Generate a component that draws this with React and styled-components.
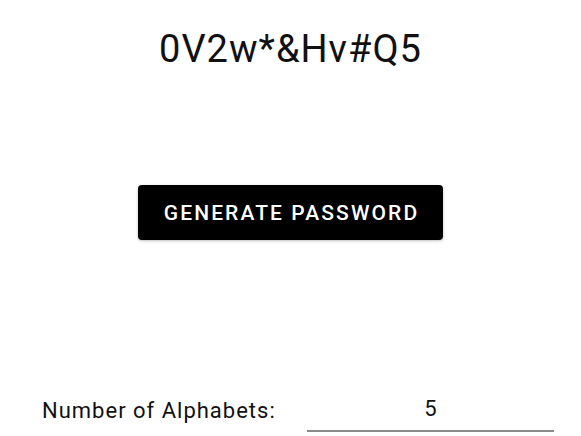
import React, { useState } from 'react';
import styled, { createGlobalStyle } from 'styled-components';

const GlobalStyle = createGlobalStyle`
    body {
        margin: 0;
        background: #ffffff;
        font-family: Roboto, "Liberation Sans", sans-serif;
    }
`;

const Page = styled.div`
    width: 581px;
    height: 436px;
    display: flex;
    flex-direction: column;
    align-items: center;
    box-sizing: border-box;
    padding-top: 27px;
`;

const Password = styled.h1`
    margin: 0;
    font-size: 38px;
    font-weight: 400;
    line-height: 44px;
    letter-spacing: 1px;
    color: #111;
`;

const Button = styled.button`
    margin-top: 114px;
    height: 55px;
    padding: 0 24px 0 26px;
    background: #000;
    color: #fff;
    border: none;
    border-radius: 4px;
    font-family: Roboto, "Liberation Sans", sans-serif;
    font-size: 21px;
    font-weight: 500;
    letter-spacing: 2.1px;
    box-shadow: 0 1px 3px rgba(0, 0, 0, 0.25);
    cursor: pointer;
`;

const Row = styled.div`
    align-self: stretch;
    margin-top: 154px;
    display: flex;
    align-items: flex-end;
    padding-left: 42px;
`;

const Label = styled.label`
    font-size: 22px;
    letter-spacing: 1px;
    color: #111;
    width: 265px;
    line-height: 30px;
    padding-bottom: 6px;
`;

const NumberInput = styled.input`
    width: 247px;
    box-sizing: border-box;
    border: none;
    border-bottom: 2px solid #8a8a8a;
    background: transparent;
    font-family: Roboto, "Liberation Sans", sans-serif;
    font-size: 22px;
    color: #111;
    text-align: center;
    padding: 0 0 6px;
    line-height: 30px;
    outline: none;
`;

export default function App() {
    const [count, setCount] = useState('5');
    return (
        <>
            <GlobalStyle />
            <Page>
                <Password>0V2w*&amp;Hv#Q5</Password>
                <Button>GENERATE PASSWORD</Button>
                <Row>
                    <Label>Number of Alphabets:</Label>
                    <NumberInput value={count} onChange={(e) => setCount(e.target.value)} />
                </Row>
            </Page>
        </>
    );
}
